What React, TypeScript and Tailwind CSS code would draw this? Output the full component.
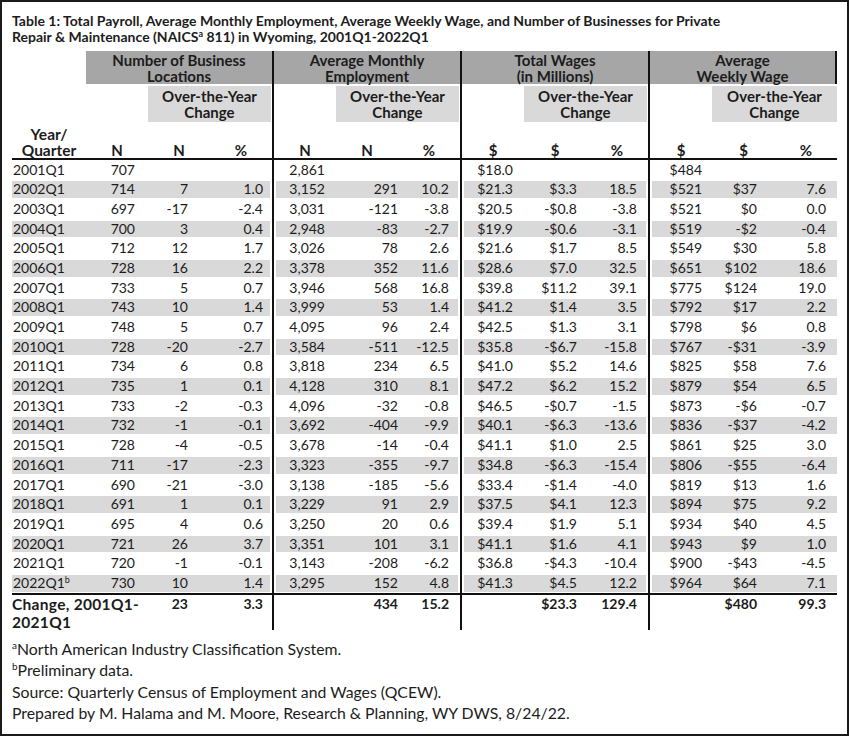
import React from "react";

const rows: { y: string; sup?: string; v: string[] }[] = [
  { y: "2001Q1", v: ["707", "", "", "2,861", "", "", "$18.0", "", "", "$484", "", ""] },
  { y: "2002Q1", v: ["714", "7", "1.0", "3,152", "291", "10.2", "$21.3", "$3.3", "18.5", "$521", "$37", "7.6"] },
  { y: "2003Q1", v: ["697", "-17", "-2.4", "3,031", "-121", "-3.8", "$20.5", "-$0.8", "-3.8", "$521", "$0", "0.0"] },
  { y: "2004Q1", v: ["700", "3", "0.4", "2,948", "-83", "-2.7", "$19.9", "-$0.6", "-3.1", "$519", "-$2", "-0.4"] },
  { y: "2005Q1", v: ["712", "12", "1.7", "3,026", "78", "2.6", "$21.6", "$1.7", "8.5", "$549", "$30", "5.8"] },
  { y: "2006Q1", v: ["728", "16", "2.2", "3,378", "352", "11.6", "$28.6", "$7.0", "32.5", "$651", "$102", "18.6"] },
  { y: "2007Q1", v: ["733", "5", "0.7", "3,946", "568", "16.8", "$39.8", "$11.2", "39.1", "$775", "$124", "19.0"] },
  { y: "2008Q1", v: ["743", "10", "1.4", "3,999", "53", "1.4", "$41.2", "$1.4", "3.5", "$792", "$17", "2.2"] },
  { y: "2009Q1", v: ["748", "5", "0.7", "4,095", "96", "2.4", "$42.5", "$1.3", "3.1", "$798", "$6", "0.8"] },
  { y: "2010Q1", v: ["728", "-20", "-2.7", "3,584", "-511", "-12.5", "$35.8", "-$6.7", "-15.8", "$767", "-$31", "-3.9"] },
  { y: "2011Q1", v: ["734", "6", "0.8", "3,818", "234", "6.5", "$41.0", "$5.2", "14.6", "$825", "$58", "7.6"] },
  { y: "2012Q1", v: ["735", "1", "0.1", "4,128", "310", "8.1", "$47.2", "$6.2", "15.2", "$879", "$54", "6.5"] },
  { y: "2013Q1", v: ["733", "-2", "-0.3", "4,096", "-32", "-0.8", "$46.5", "-$0.7", "-1.5", "$873", "-$6", "-0.7"] },
  { y: "2014Q1", v: ["732", "-1", "-0.1", "3,692", "-404", "-9.9", "$40.1", "-$6.3", "-13.6", "$836", "-$37", "-4.2"] },
  { y: "2015Q1", v: ["728", "-4", "-0.5", "3,678", "-14", "-0.4", "$41.1", "$1.0", "2.5", "$861", "$25", "3.0"] },
  { y: "2016Q1", v: ["711", "-17", "-2.3", "3,323", "-355", "-9.7", "$34.8", "-$6.3", "-15.4", "$806", "-$55", "-6.4"] },
  { y: "2017Q1", v: ["690", "-21", "-3.0", "3,138", "-185", "-5.6", "$33.4", "-$1.4", "-4.0", "$819", "$13", "1.6"] },
  { y: "2018Q1", v: ["691", "1", "0.1", "3,229", "91", "2.9", "$37.5", "$4.1", "12.3", "$894", "$75", "9.2"] },
  { y: "2019Q1", v: ["695", "4", "0.6", "3,250", "20", "0.6", "$39.4", "$1.9", "5.1", "$934", "$40", "4.5"] },
  { y: "2020Q1", v: ["721", "26", "3.7", "3,351", "101", "3.1", "$41.1", "$1.6", "4.1", "$943", "$9", "1.0"] },
  { y: "2021Q1", v: ["720", "-1", "-0.1", "3,143", "-208", "-6.2", "$36.8", "-$4.3", "-10.4", "$900", "-$43", "-4.5"] },
  { y: "2022Q1", sup: "b", v: ["730", "10", "1.4", "3,295", "152", "4.8", "$41.3", "$4.5", "12.2", "$964", "$64", "7.1"] },
];

// data column classes per group
const DC: string[][] = [
  ["w-[60px] pr-[11px]", "w-[53px] pr-[11px]", "w-[73px] pr-[9px]"],
  ["w-[62px] pr-[11px]", "w-[73px] pr-[11px]", "w-[51px] pr-[11px]"],
  ["w-[62px] pr-[11px]", "w-[64px] pr-[11px]", "w-[60px] pr-[11px]"],
  ["w-[63px] pr-[11px]", "w-[55px] pr-[11px]", "w-[69px] pr-[11px]"],
];

const SEG = [
  "flex w-[186px]",
  "flex w-[188px] border-l-2 border-[#111]",
  "flex w-[188px] border-l-2 border-[#111]",
  "flex w-[189px] border-l-2 border-[#111]",
];

const SHADE = "bg-[#d9d9d9]";

function DataRow({ r, shaded }: { r: (typeof rows)[number]; shaded: boolean }) {
  return (
    <div className="flex h-[19.7px]">
      <div className="flex w-[74px] py-[1.5px]">
        <div className={`w-full pl-[1px] leading-[16.7px] ${shaded ? SHADE : ""}`}>
          {r.y}
          {r.sup && <sup className="text-[9px] top-[-0.6em]">{r.sup}</sup>}
        </div>
      </div>
      {[0, 1, 2, 3].map((g) => (
        <div key={g} className={`${SEG[g]} py-[1.5px]`}>
          {[0, 1, 2].map((c) => {
            const edgeL = g > 0 && c === 0 ? "shadow-[inset_2px_0_0_white]" : "";
            const edgeR = g < 3 && c === 2 ? "shadow-[inset_-2px_0_0_white]" : "";
            return (
              <div
                key={c}
                className={`${DC[g][c]} text-right leading-[16.7px] ${shaded ? SHADE : ""} ${shaded ? edgeL : ""} ${shaded ? edgeR : ""}`}
              >
                {r.v[g * 3 + c]}
              </div>
            );
          })}
        </div>
      ))}
    </div>
  );
}

const groupTitles: [string, string][] = [
  ["Number of Business", "Locations"],
  ["Average Monthly", "Employment"],
  ["Total Wages", "(in Millions)"],
  ["Average", "Weekly Wage"],
];

const units = [
  ["N", "N", "%"],
  ["N", "N", "%"],
  ["$", "$", "%"],
  ["$", "$", "%"],
];

export default function App() {
  return (
    <div className="bg-white w-[850px] h-[737px]">
      <div className="w-[849px] h-[736px] border-2 border-[#1a1a1a] pl-[10px] pt-[11px] text-[14px] text-[#1c1c1c] [font-family:Lato,sans-serif]">
        <div className="font-bold leading-[16px] text-[14px] mb-[6px] whitespace-nowrap">
          Table 1: Total Payroll, Average Monthly Employment, Average Weekly Wage, and Number of Businesses for Private
          <br />
          Repair &amp; Maintenance (NAICS<sup className="text-[9px] top-[-0.6em]">a</sup> 811) in Wyoming, 2001Q1-2022Q1
        </div>

        {/* header row 1 */}
        <div className="flex h-[33px] font-bold text-[15px] leading-[16px]">
          <div className="w-[74px]" />
          {groupTitles.map((t, g) => (
            <div
              key={g}
              className={`${SEG[g]} ${g === 3 ? "border-r-2" : ""} bg-[#a6a6a6] items-center justify-center text-center`}
            >
              <div>
                {t[0]}
                <br />
                {t[1]}
              </div>
            </div>
          ))}
        </div>

        {/* header row 2 */}
        <div className="flex h-[38px] font-bold text-[15px] leading-[16px]">
          <div className="w-[74px]" />
          {[0, 1, 2, 3].map((g) => (
            <div key={g} className={SEG[g]}>
              <div className="w-[62px]" />
              <div
                className={`flex-1 mt-[2px] ${g < 3 ? "mr-[1px]" : ""} bg-[#d9d9d9] flex items-center justify-center text-center`}
              >
                <div>
                  Over-the-Year
                  <br />
                  Change
                </div>
              </div>
            </div>
          ))}
        </div>

        {/* header row 3 */}
        <div className="flex h-[38px] w-[825px] border-b-2 border-[#111] font-bold leading-[16px]">
          <div className="w-[74px] flex items-end justify-center text-center text-[15.5px]">
            <div>
              Year/
              <br />
              Quarter
            </div>
          </div>
          {[0, 1, 2, 3].map((g) => (
            <div key={g} className={`${SEG[g]} items-end text-[15px]`}>
              {units[g].map((u, c) => (
                <div key={c} className="flex-1 text-center">
                  {u}
                </div>
              ))}
            </div>
          ))}
        </div>

        {/* data */}
        {rows.map((r, i) => (
          <DataRow key={r.y} r={r} shaded={i % 2 === 1} />
        ))}
        <div className="h-[2px] w-[825px] bg-[#111]" />

        {/* change row */}
        <div className="flex h-[35px] font-bold leading-[18px]">
          <div className="w-[134px] whitespace-nowrap text-[15.5px] tracking-[0.3px]">
            Change, 2001Q1-
            <br />
            2021Q1
          </div>
          <div className="flex w-[126px]">
            <div className="w-[53px] pr-[11px] text-right">23</div>
            <div className="w-[73px] pr-[9px] text-right">3.3</div>
          </div>
          <div className={SEG[1]}>
            <div className="w-[62px]" />
            <div className="w-[73px] pr-[11px] text-right">434</div>
            <div className="w-[51px] pr-[11px] text-right">15.2</div>
          </div>
          <div className={SEG[2]}>
            <div className="w-[62px]" />
            <div className="w-[64px] pr-[11px] text-right">$23.3</div>
            <div className="w-[60px] pr-[11px] text-right">129.4</div>
          </div>
          <div className={SEG[3]}>
            <div className="w-[63px]" />
            <div className="w-[55px] pr-[11px] text-right">$480</div>
            <div className="w-[69px] pr-[11px] text-right">99.3</div>
          </div>
        </div>

        {/* footnotes */}
        <div className="mt-[8px] leading-[21.3px] text-[15.8px]">
          <div>
            <sup className="text-[10px] top-[-0.6em]">a</sup>North American Industry Classification System.
          </div>
          <div>
            <sup className="text-[10px] top-[-0.6em]">b</sup>Preliminary data.
          </div>
          <div>Source: Quarterly Census of Employment and Wages (QCEW).</div>
          <div>Prepared by M. Halama and M. Moore, Research &amp; Planning, WY DWS, 8/24/22.</div>
        </div>
      </div>
    </div>
  );
}
